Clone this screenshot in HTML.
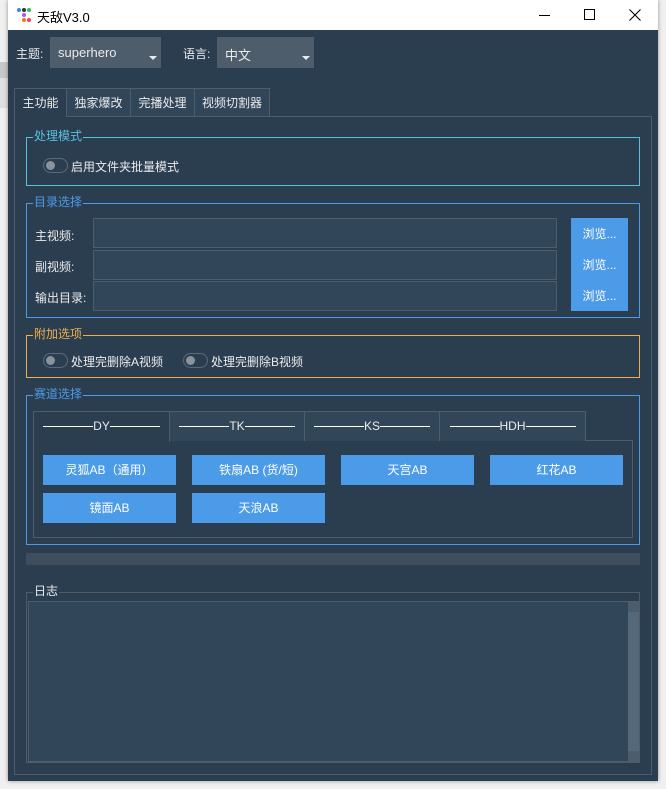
<!DOCTYPE html>
<html><head><meta charset="utf-8"><style>
*{box-sizing:border-box;margin:0;padding:0}
body{width:666px;height:789px;background:#f0f0f0;position:relative;overflow:hidden;font-family:"Liberation Sans","Noto Sans CJK SC",sans-serif;font-size:12px;color:#ebebeb}
.a{position:absolute}
.win{left:8px;top:0;width:650px;height:781px;background:#2b3e50;box-shadow:0 0 4px rgba(0,0,0,.4)}
.tb{left:8px;top:0;width:650px;height:30px;background:#fff;color:#000}
.cb{background:#4e5d6c;color:#ebebeb;padding:8px 0 0 8px;font-size:13px}
.cb:after{content:"";position:absolute;right:4px;bottom:8px;border:4px solid transparent;border-top:4px solid #ebebeb;border-bottom:0}
.tab{top:88px;height:28px;background:#32465a;border:1px solid #4e5d6c;border-bottom:none;text-align:center;line-height:28px;font-size:12px}
.g{border:1px solid}
.gt{font-size:12px;background:#2b3e50;padding:0 1px;line-height:14px}
.tg{width:25px;height:15px;border:1px solid #5a6a7a;border-radius:8px;background:#2b3e50}
.tg:after{content:"";position:absolute;left:2px;top:2px;width:9px;height:9px;border-radius:50%;background:#8a939c}
.in{left:93px;width:464px;background:#32465a;border:1px solid #4e5d6c;height:30px}
.btn{background:#4c9be8;color:#fff;text-align:center;line-height:30px;font-size:12px}
.it{top:411px;height:30px;background:#32465a;border:1px solid #4e5d6c;border-bottom:none;text-align:center;line-height:28px}
.ln{display:inline-block;width:50px;height:1px;background:#fff;vertical-align:middle}
</style></head><body>
<div class="a" style="left:0;top:62px;width:8px;height:16px;background:#c8c8c8"></div>
<div class="a" style="left:0;top:78px;width:8px;height:30px;background:#e0e0e0"></div>
<div class="a win"></div>
<div class="a tb">
  <svg class="a" style="left:8px;top:7px" width="16" height="16"><circle cx="3" cy="3" r="2" fill="#3b82f6"/><circle cx="8" cy="3" r="2" fill="#333"/><circle cx="13" cy="3" r="2" fill="#22c55e"/><circle cx="8" cy="8" r="2" fill="#a855f7"/><circle cx="8" cy="13" r="2" fill="#f97316"/><circle cx="13" cy="13" r="2" fill="#ef4444"/></svg>
  <div class="a" style="left:29px;top:7px;font-size:13px">天敌V3.0</div>
  <div class="a" style="left:531px;top:15px;width:11px;height:1px;background:#000"></div>
  <div class="a" style="left:576px;top:9px;width:11px;height:11px;border:1px solid #000"></div>
  <svg class="a" style="left:621px;top:9px" width="12" height="12"><path d="M0.5 0.5L11.5 11.5M11.5 0.5L0.5 11.5" stroke="#000" stroke-width="1.1"/></svg>
</div>
<div class="a" style="left:16px;top:45px;font-size:12px">主题:</div>
<div class="a cb" style="left:50px;top:37px;width:111px;height:31px">superhero</div>
<div class="a" style="left:183px;top:45px">语言:</div>
<div class="a cb" style="left:217px;top:37px;width:97px;height:31px">中文</div>

<div class="a" style="left:14px;top:116px;width:638px;height:659px;border:1px solid #4e5d6c"></div>
<div class="a tab" style="left:14px;width:53px;background:#2b3e50;height:29px">主功能</div>
<div class="a tab" style="left:66px;width:65px">独家爆改</div>
<div class="a tab" style="left:130px;width:65px">完播处理</div>
<div class="a tab" style="left:194px;width:76px">视频切割器</div>

<div class="a g" style="left:26px;top:137px;width:614px;height:49px;border-color:#5bc0de"></div>
<div class="a gt" style="left:33px;top:129px;color:#5bc0de">处理模式</div>
<div class="a tg" style="left:43px;top:158px"></div>
<div class="a" style="left:71px;top:158px">启用文件夹批量模式</div>

<div class="a g" style="left:26px;top:203px;width:614px;height:115px;border-color:#4c9be8"></div>
<div class="a gt" style="left:33px;top:195px;color:#4c9be8">目录选择</div>
<div class="a" style="left:35px;top:227px">主视频:</div>
<div class="a" style="left:35px;top:258px">副视频:</div>
<div class="a" style="left:35px;top:289px">输出目录:</div>
<div class="a in" style="top:218px"></div>
<div class="a in" style="top:250px"></div>
<div class="a in" style="top:281px"></div>
<div class="a" style="left:571px;top:218px;width:57px;height:93px;background:#4c9be8"></div>
<div class="a btn" style="left:571px;top:219px;width:57px">浏览...</div>
<div class="a btn" style="left:571px;top:250px;width:57px">浏览...</div>
<div class="a btn" style="left:571px;top:281px;width:57px">浏览...</div>

<div class="a g" style="left:26px;top:335px;width:614px;height:43px;border-color:#f0ad4e"></div>
<div class="a gt" style="left:33px;top:327px;color:#f0ad4e">附加选项</div>
<div class="a tg" style="left:43px;top:353px"></div>
<div class="a" style="left:71px;top:353px">处理完删除A视频</div>
<div class="a tg" style="left:183px;top:353px"></div>
<div class="a" style="left:211px;top:353px">处理完删除B视频</div>

<div class="a g" style="left:26px;top:395px;width:614px;height:150px;border-color:#4c9be8"></div>
<div class="a gt" style="left:33px;top:387px;color:#4c9be8">赛道选择</div>
<div class="a" style="left:33px;top:440px;width:600px;height:98px;border:1px solid #4e5d6c"></div>
<div class="a it" style="left:33px;width:137px;background:#2b3e50;height:31px"><span class="ln"></span>DY<span class="ln"></span></div>
<div class="a it" style="left:169px;width:136px"><span class="ln"></span>TK<span class="ln"></span></div>
<div class="a it" style="left:304px;width:136px"><span class="ln"></span>KS<span class="ln"></span></div>
<div class="a it" style="left:439px;width:147px"><span class="ln"></span>HDH<span class="ln"></span></div>
<div class="a btn" style="left:43px;top:455px;width:133px">灵狐AB（通用）</div>
<div class="a btn" style="left:192px;top:455px;width:133px">铁扇AB (货/短)</div>
<div class="a btn" style="left:341px;top:455px;width:133px">天宫AB</div>
<div class="a btn" style="left:490px;top:455px;width:133px">红花AB</div>
<div class="a btn" style="left:43px;top:493px;width:133px">镜面AB</div>
<div class="a btn" style="left:192px;top:493px;width:133px">天浪AB</div>

<div class="a" style="left:26px;top:553px;width:614px;height:12px;background:#3f4e5d"></div>

<div class="a g" style="left:26px;top:592px;width:614px;height:171px;border-color:#4e5d6c"></div>
<div class="a gt" style="left:33px;top:584px">日志</div>
<div class="a" style="left:28px;top:601px;width:611px;height:161px;background:#32465a;border:1px solid #4e5d6c"></div>
<div class="a" style="left:628px;top:602px;width:11px;height:159px;background:#55687a"></div>
<div class="a" style="left:628px;top:602px;width:11px;height:10px;background:#4e5d6c"></div>
<div class="a" style="left:628px;top:751px;width:11px;height:10px;background:#4e5d6c"></div>
</body></html>
